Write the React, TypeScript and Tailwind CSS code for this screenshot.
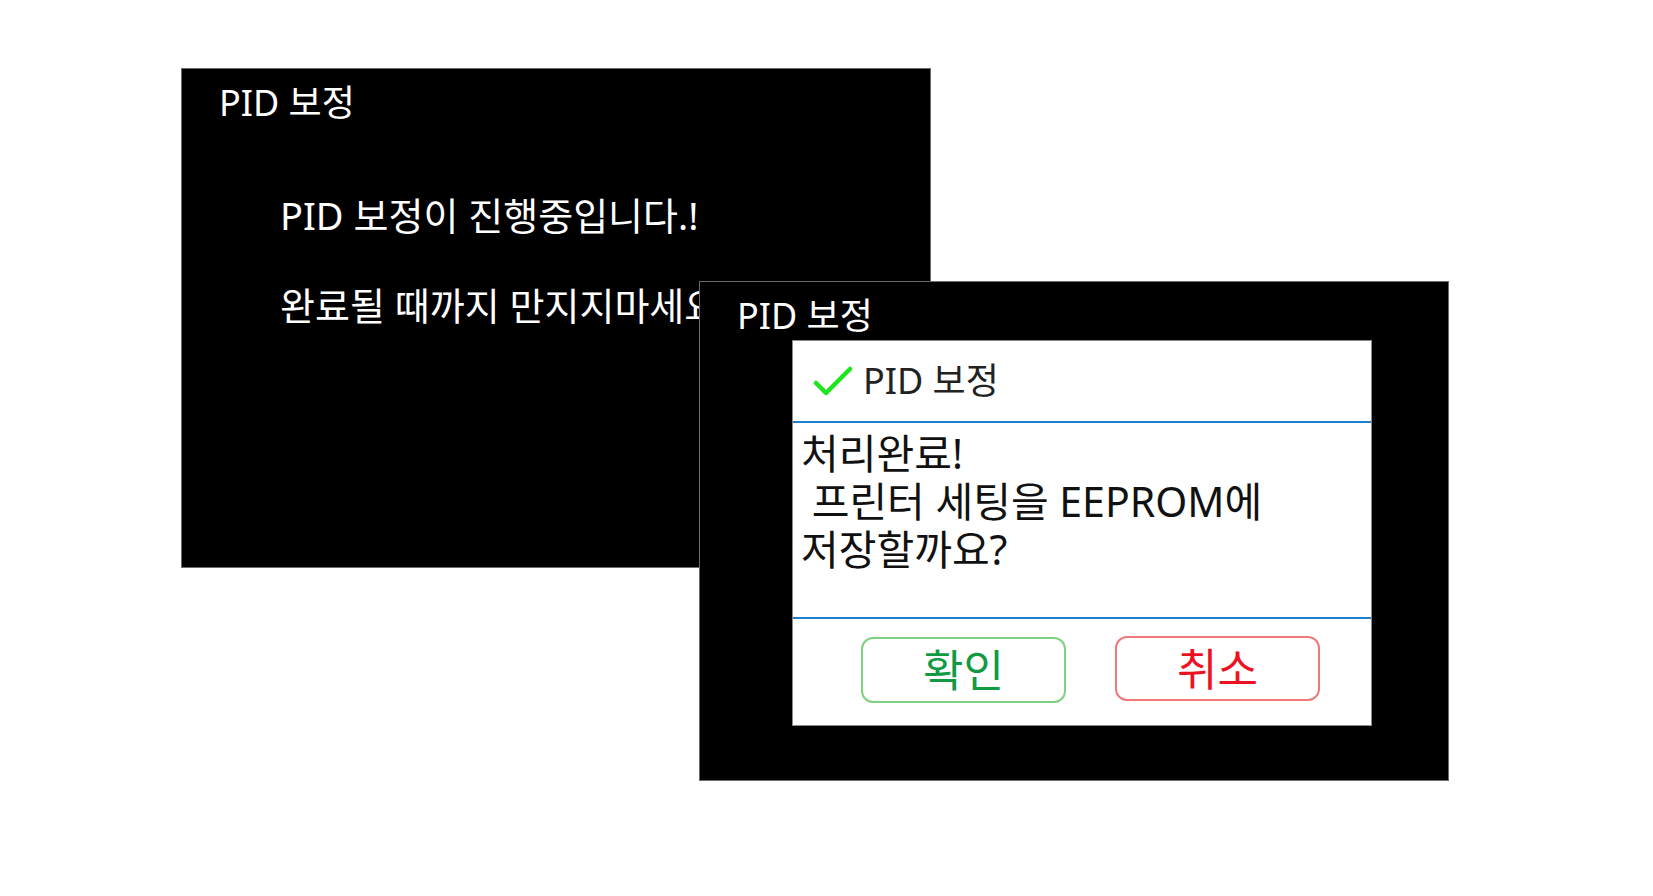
import React from "react";

const font = { fontFamily: '"Noto Sans", "Noto Sans CJK KR", sans-serif' };

function Check() {
  return (
    <svg width="40" height="30" viewBox="0 0 40 30" className="shrink-0">
      <path d="M3 17 L13 27 L37 3" fill="none" stroke="#1ee61e" strokeWidth="4.5" strokeLinecap="round" strokeLinejoin="round" />
    </svg>
  );
}

export default function App() {
  return (
    <div className="relative w-full h-[896px] bg-white overflow-hidden" style={font}>
      {/* Left screen */}
      <div className="absolute left-[181px] top-[68px] w-[750px] h-[500px] bg-black border border-[#6b6b6b] text-white">
        <div className="pl-[37px] pt-[9px] text-[36px] leading-[50px]">PID 보정</div>
        <div className="pl-[98px] pt-[62px] flex flex-col gap-[40px] text-[38px] leading-[50px]">
          <div>PID 보정이 진행중입니다.!</div>
          <div>완료될 때까지 만지지마세요</div>
        </div>
      </div>

      {/* Right screen */}
      <div className="absolute left-[699px] top-[281px] w-[750px] h-[500px] bg-black border border-[#6b6b6b] flex flex-col">
        <div className="pl-[37px] pt-[9px] h-[58px] text-[36px] leading-[50px] text-white">PID 보정</div>
        <div className="ml-[92px] w-[580px] h-[386px] bg-white border border-[#8a8a8a] flex flex-col">
          <div className="h-[82px] shrink-0 flex items-center pl-[20px] gap-[10px] border-b-2 border-[#1f7fcf]">
            <Check />
            <span className="text-[36px] leading-none text-[#222]">PID 보정</span>
          </div>
          <div className="h-[196px] shrink-0 pl-[8px] pt-[6px] text-[41px] leading-[48px] text-[#111] border-b-2 border-[#1f7fcf]">
            <div>처리완료!</div>
            <div>&nbsp;프린터 세팅을 EEPROM에</div>
            <div>저장할까요?</div>
          </div>
          <div className="flex-1 flex items-start pt-[18px] pl-[68px] gap-[49px]">
            <button className="w-[205px] h-[66px] rounded-[12px] border-2 border-[#7fd07f] text-[#119944] text-[44px] leading-none flex items-center justify-center">확인</button>
            <button className="w-[205px] h-[65px] -mt-[1px] rounded-[12px] border-2 border-[#f07a7a] text-[#ee1122] text-[44px] leading-none flex items-center justify-center">취소</button>
          </div>
        </div>
      </div>
    </div>
  );
}
